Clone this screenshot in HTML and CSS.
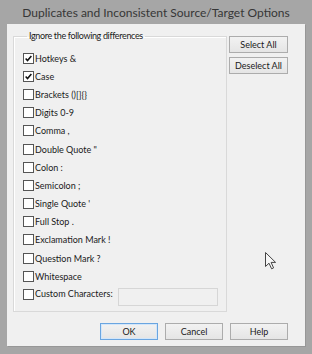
FILE: index.html
```html
<!DOCTYPE html>
<html>
<head>
<meta charset="utf-8">
<link rel="stylesheet" href="styles.css">
</head>
<body>
<div class="window">
  <div class="titlebar">Duplicates and Inconsistent Source/Target Options</div>
  <div class="client">
    <div class="main">
      <fieldset class="group">
        <legend>Ignore the following differences</legend>
        <ul class="options">
          <li class="option"><span class="box checked"><svg viewBox="0 0 11 11"><path d="M2 5.6 L4.3 8 L9 2.4"/></svg></span><span class="label">Hotkeys &amp;</span></li>
          <li class="option"><span class="box checked"><svg viewBox="0 0 11 11"><path d="M2 5.6 L4.3 8 L9 2.4"/></svg></span><span class="label">Case</span></li>
          <li class="option"><span class="box"></span><span class="label">Brackets ()[]{}</span></li>
          <li class="option"><span class="box"></span><span class="label">Digits 0-9</span></li>
          <li class="option"><span class="box"></span><span class="label">Comma ,</span></li>
          <li class="option"><span class="box"></span><span class="label">Double Quote "</span></li>
          <li class="option"><span class="box"></span><span class="label">Colon :</span></li>
          <li class="option"><span class="box"></span><span class="label">Semicolon ;</span></li>
          <li class="option"><span class="box"></span><span class="label">Single Quote '</span></li>
          <li class="option"><span class="box"></span><span class="label">Full Stop .</span></li>
          <li class="option"><span class="box"></span><span class="label">Exclamation Mark !</span></li>
          <li class="option"><span class="box"></span><span class="label">Question Mark ?</span></li>
          <li class="option"><span class="box"></span><span class="label">Whitespace</span></li>
          <li class="option custom"><span class="box"></span><span class="label">Custom Characters:</span><span class="input"></span></li>
        </ul>
      </fieldset>
      <div class="side">
        <button class="btn">Select All</button>
        <button class="btn">Deselect All</button>
      </div>
    </div>
    <div class="footer">
      <button class="btn default">OK</button>
      <button class="btn">Cancel</button>
      <button class="btn">Help</button>
    </div>
  </div>
  <svg class="cursor" viewBox="0 0 12 18" width="12" height="18"><path d="M0.5 0.5 L0.5 14.5 L4 11.2 L6.6 16.8 L8.6 15.9 L6.1 10.4 L10.6 10.4 Z"/></svg>
</div>
</body>
</html>
```
FILE: styles.css
```css
* { box-sizing: border-box; }
html, body { margin: 0; padding: 0; }
body {
  width: 312px;
  height: 354px;
  overflow: hidden;
  font-family: Lato, "Open Sans", sans-serif;
  background: #a6a6a6;
}
.window {
  position: relative;
  width: 312px;
  height: 354px;
  background: #a6a6a6;
  padding: 0 7px 8px 7px;
  display: flex;
  flex-direction: column;
}
.titlebar {
  height: 24px;
  line-height: 24px;
  padding-top: 1px;
  text-align: center;
  font-size: 12px;
  color: #363636;
  white-space: nowrap;
}
.client {
  flex: 1;
  background: #f0f0f0;
  padding: 6px 17px 6px 6px;
  display: flex;
  flex-direction: column;
  font-size: 9px;
  color: #1a1a1a;
  box-shadow: 1px 1px 0 #979797;
}
.main {
  display: flex;
  gap: 2px;
}
.group {
  margin: 0;
  width: 214px;
  height: 282px;
  border: 1px solid #d9d9d9;
  box-shadow: inset 1px 1px 0 #fff;
  padding: 7px 8px 0 9px;
  min-width: 0;
}
.group legend {
  margin-left: 4px;
  padding: 0 2px;
  line-height: 12px;
  font-size: 9px;
  letter-spacing: -0.35px;
  color: #1a1a1a;
}
.options {
  list-style: none;
  margin: 0;
  padding: 0;
}
.option {
  height: 18.2px;
  display: flex;
  align-items: center;
}
.box {
  width: 11px;
  height: 11px;
  border: 1px solid #555;
  background: #fff;
  margin-right: 1px;
  flex: none;
  display: flex;
}
.box svg {
  width: 9px;
  height: 9px;
  fill: none;
  stroke: #111;
  stroke-width: 1.9;
}
.label {
  white-space: nowrap;
}
.custom {
  align-items: flex-start;
  height: 21px;
}
.custom .box { margin-top: 3.6px; }
.custom .label { line-height: 18.2px; }
.input {
  margin-left: auto;
  margin-top: 3px;
  width: 100px;
  height: 18px;
  border: 1px solid #d6d6d6;
  background: #f0f0f0;
}
.side {
  width: 59px;
  margin-top: 6px;
  display: flex;
  flex-direction: column;
  gap: 4px;
}
.btn {
  font-family: inherit;
  font-size: 9px;
  color: #1a1a1a;
  height: 17px;
  padding: 0;
  border: 1px solid #acacac;
  background: linear-gradient(#f2f2f2, #e5e5e5);
  border-radius: 0;
}
.footer {
  margin-top: 11px;
  display: flex;
  justify-content: flex-end;
  gap: 7px;
}
.footer .btn { width: 58px; }
.btn.default {
  border-color: #6aa5e0;
  box-shadow: inset 0 0 0 1px #d2e6fa;
}
.cursor {
  position: absolute;
  left: 265px;
  top: 252px;
}
.cursor path {
  fill: #f6f6f6;
  stroke: #444;
  stroke-width: 1;
  stroke-linejoin: round;
}
```
